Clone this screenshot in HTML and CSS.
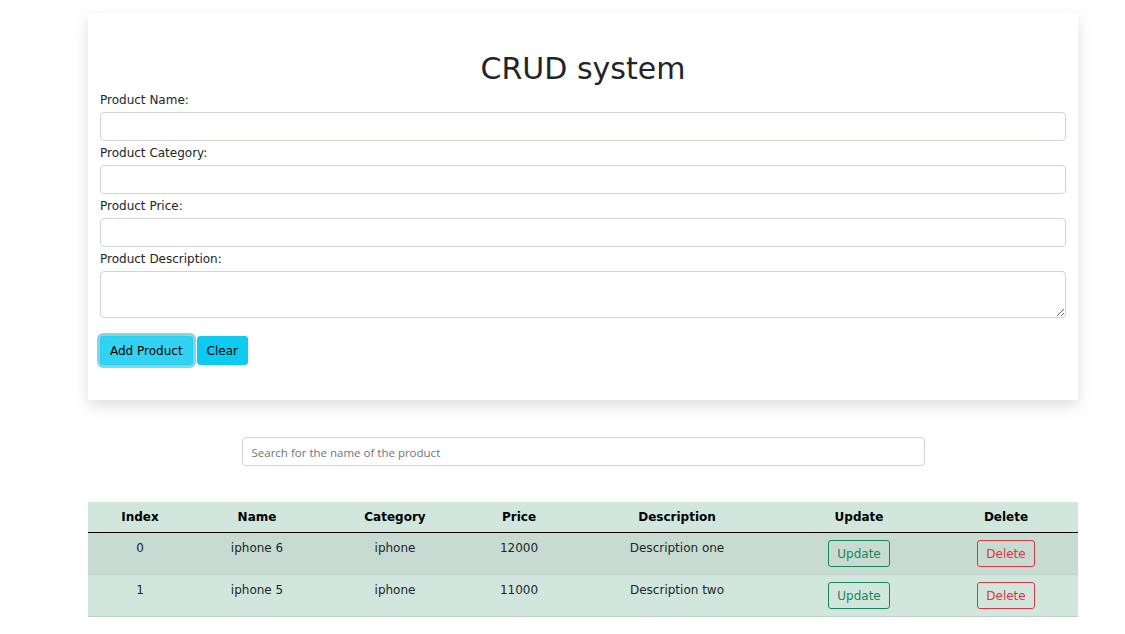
FILE: index.html
```html
<!DOCTYPE html>
<html lang="en">
<head>
<meta charset="utf-8">
<title>CRUD system</title>
<link rel="stylesheet" href="styles.css">
</head>
<body>
<div class="wrapper">
  <div class="card">
    <h1 class="title">CRUD system</h1>
    <label class="label" for="pname">Product Name:</label>
    <input class="field" id="pname" type="text">
    <label class="label" for="pcat">Product Category:</label>
    <input class="field" id="pcat" type="text">
    <label class="label" for="pprice">Product Price:</label>
    <input class="field" id="pprice" type="text">
    <label class="label" for="pdesc">Product Description:</label>
    <textarea class="field area" id="pdesc"></textarea>
    <div class="actions">
      <button class="btn btn-info btn-focus">Add Product</button>
      <button class="btn btn-info">Clear</button>
    </div>
  </div>

  <input class="search" type="text" placeholder="Search for the name of the product">

  <table class="table">
    <colgroup>
      <col class="c-index"><col class="c-name"><col class="c-cat"><col class="c-price"><col class="c-desc"><col class="c-upd"><col class="c-del">
    </colgroup>
    <thead>
      <tr><th>Index</th><th>Name</th><th>Category</th><th>Price</th><th>Description</th><th>Update</th><th>Delete</th></tr>
    </thead>
    <tbody>
      <tr class="striped">
        <td>0</td><td>iphone 6</td><td>iphone</td><td>12000</td><td>Description one</td>
        <td><button class="btn-sm btn-upd">Update</button></td>
        <td><button class="btn-sm btn-del">Delete</button></td>
      </tr>
      <tr>
        <td>1</td><td>iphone 5</td><td>iphone</td><td>11000</td><td>Description two</td>
        <td><button class="btn-sm btn-upd">Update</button></td>
        <td><button class="btn-sm btn-del">Delete</button></td>
      </tr>
    </tbody>
  </table>
</div>
</body>
</html>
```

FILE: styles.css
```css
* { box-sizing: border-box; }
html, body { margin: 0; padding: 0; background: #fff; }
body {
  font-family: "DejaVu Sans", Verdana, sans-serif;
  font-size: 12px;
  color: #212529;
}
.wrapper {
  width: 990px;
  margin-left: 88px;
  padding-top: 13px;
}
.card {
  display: flex;
  flex-direction: column;
  height: 387px;
  padding: 39px 12px 35px;
  background: #fff;
  box-shadow: 0 6px 14px rgba(0,0,0,0.13);
}
.title {
  margin: 0;
  height: 36px;
  font-size: 30px;
  line-height: 34px;
  font-weight: 400;
  text-align: center;
  color: #212529;
}
.label {
  display: block;
  margin: 3px 0 3px;
  line-height: 18px;
}
.field {
  display: block;
  width: 100%;
  height: 29px;
  border: 1px solid #ced4da;
  border-radius: 4px;
  background: #fff;
  font: inherit;
  margin: 0;
}
.area {
  height: 47px;
  resize: vertical;
}
.actions {
  display: flex;
  gap: 4px;
  margin-top: 18px;
}
.btn {
  height: 29px;
  padding: 1px 9px 0;
  border: 1px solid #0dcaf0;
  border-radius: 3px;
  background: #0dcaf0;
  color: #000;
  font: inherit;
  line-height: 26px;
}
.btn-focus {
  background: #31d2f2;
  border-color: #25cff2;
  box-shadow: 0 0 0 3px rgba(11,172,204,0.5);
}
.search {
  display: block;
  width: 683px;
  height: 29px;
  margin: 37px auto 0;
  padding: 1px 9px 0;
  border: 1px solid #ced4da;
  border-radius: 4px;
  font-family: "Open Sans", "Noto Sans", sans-serif;
  font-size: 11.5px;
  color: #212529;
}
.search::placeholder { color: #6c757d; }
.table {
  width: 990px;
  margin-top: 36px;
  border-collapse: collapse;
  table-layout: fixed;
  background: #d1e7dd;
  color: #000;
}
.c-index { width: 104px; }
.c-name { width: 130px; }
.c-cat { width: 146px; }
.c-price { width: 102px; }
.c-desc { width: 214px; }
.c-upd { width: 150px; }
.c-del { width: 144px; }
.table th {
  padding: 7px 8px;
  line-height: 16px;
  font-weight: 700;
  text-align: center;
  border-bottom: 1px solid #000;
}
.table td {
  padding: 7px 8px;
  line-height: 16px;
  text-align: center;
  vertical-align: top;
  border-bottom: 1px solid #bcd0c7;
  color: #212529;
}
.table tr.striped td { background: #c7dbd2; }
.btn-sm {
  height: 27px;
  padding: 1px 8px 0;
  border-radius: 3px;
  background: transparent;
  font: inherit;
  line-height: 24px;
  vertical-align: top;
}
.btn-upd { border: 1px solid #198754; color: #198754; }
.btn-del { border: 1px solid #dc3545; color: #dc3545; }
```
